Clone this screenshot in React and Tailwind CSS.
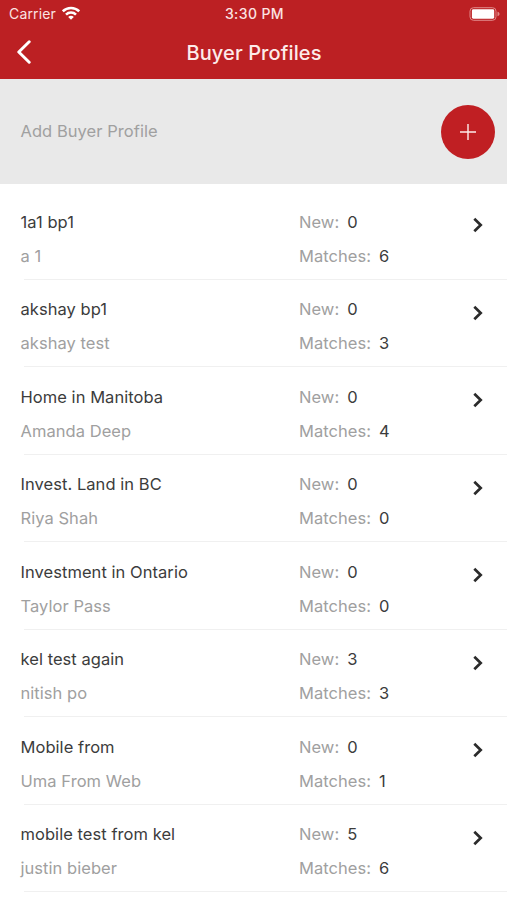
import React from 'react';

const PROFILES = [
    { name: "1a1 bp1", client: "a 1", fresh: 0, matches: 6 },
    { name: "akshay bp1", client: "akshay test", fresh: 0, matches: 3 },
    { name: "Home in Manitoba", client: "Amanda Deep", fresh: 0, matches: 4 },
    { name: "Invest. Land in BC", client: "Riya Shah", fresh: 0, matches: 0 },
    { name: "Investment in Ontario", client: "Taylor Pass", fresh: 0, matches: 0 },
    { name: "kel test again", client: "nitish po", fresh: 3, matches: 3 },
    { name: "Mobile from", client: "Uma From Web", fresh: 0, matches: 1 },
    { name: "mobile test from kel", client: "justin bieber", fresh: 5, matches: 6 },
];

const StatusBar = () => (
    <div className="grid h-[27px] grid-cols-3 items-center pl-[9px] pr-[7px] text-[14px] leading-none text-[#fbe3e2]">
        <div className="flex items-center gap-1.5">
            <span className="tracking-[0.15px]">Carrier</span>
            <svg width="18" height="14" viewBox="0 0 18 14" fill="none" stroke="white" strokeWidth="2.5" className="-mt-0.5">
                <path d="M0.8 5.3a11.6 11.6 0 0 1 16.4 0" />
                <path d="M4 8.6a7 7 0 0 1 10 0" />
                <path d="M9 13.8 6.2 11a3.9 3.9 0 0 1 5.6 0Z" fill="white" stroke="none" />
            </svg>
        </div>
        <div className="text-center text-[14px] font-medium tracking-[0.4px]">3:30 PM</div>
        <div className="flex justify-end">
            <svg width="31" height="14" viewBox="0 0 31 14" fill="none">
                <rect x="1" y="0.7" width="26" height="12.6" rx="3.5" stroke="#e08a8a" strokeWidth="1" />
                <rect x="2.9" y="2.3" width="22.3" height="9.4" rx="1.4" fill="white" />
                <path d="M28.5 4.8c1.5.4 2 1.2 2 2.2s-.5 1.8-2 2.2Z" fill="#e08a8a" />
            </svg>
        </div>
    </div>
);

const Stat = ({ label, value }) => (
    <div className="flex gap-2">
        <span className="text-[#a0a0a0]">{label}:</span>
        <span className="text-[#3c3c3c]">{value}</span>
    </div>
);

const ProfileRow = ({ profile }) => (
    <li className="h-[87.5px]">
        <div className="flex h-[86.5px] pl-[20.5px] pr-[23px] pt-[12.5px] leading-[34.25px]">
            <div className="w-[278.5px] tracking-[0.05px]">
                <div className="text-[#3c3c3c]">{profile.name}</div>
                <div className="text-[#a0a0a0]">{profile.client}</div>
            </div>
            <div className="flex-1 tracking-[0.05px]">
                <Stat label="New" value={profile.fresh} />
                <Stat label="Matches" value={profile.matches} />
            </div>
            <svg width="12" height="16" viewBox="0 0 12 16" fill="none" stroke="#2b2b2b" strokeWidth="2.7" className="mt-[12.5px]">
                <path d="M2.3 1.8 8.7 8l-6.400 6.200" />
            </svg>
        </div>
        <div className="ml-6 h-px bg-[#f0f0f0]" />
    </li>
);

const App = () => {
    return (
        <div className="h-[900px] w-full overflow-hidden bg-white font-['Inter',sans-serif] text-[16.5px]">
            {/* HEADER */}
            <header className="h-[79px] bg-[#bc2023]">
                <StatusBar />
                <div className="grid h-[50px] grid-cols-[61px_1fr_60px] items-center">
                    <button className="pl-4">
                        <svg width="16" height="24" viewBox="0 0 16 24" fill="none" stroke="white" strokeWidth="3" strokeLinecap="round" strokeLinejoin="round">
                            <path d="M13.2 1.8 2.8 12l10.4 10.2" />
                        </svg>
                    </button>
                    <h1 className="pt-px text-center text-[20px] font-medium leading-none tracking-[0.1px] text-[#fdecea]">Buyer Profiles</h1>
                </div>
            </header>

            {/* ADD PROFILE */}
            <section className="flex h-[105px] items-center justify-between bg-[#e9e9e9] pl-[20.5px] pr-3">
                <span className="tracking-[0.05px] text-[#a0a0a0]">Add Buyer Profile</span>
                <button className="flex size-[54px] items-center justify-center rounded-full bg-[#c01f23]">
                    <svg width="16" height="16" viewBox="0 0 16 16" stroke="#fdecea" strokeWidth="1.4">
                        <path d="M8 0v16M0 8h16" />
                    </svg>
                </button>
            </section>

            {/* LIST */}
            <ul className="pt-2">
                {PROFILES.map((profile) => (
                    <ProfileRow key={profile.name} profile={profile} />
                ))}
            </ul>
        </div>
    );
};

export default App;
